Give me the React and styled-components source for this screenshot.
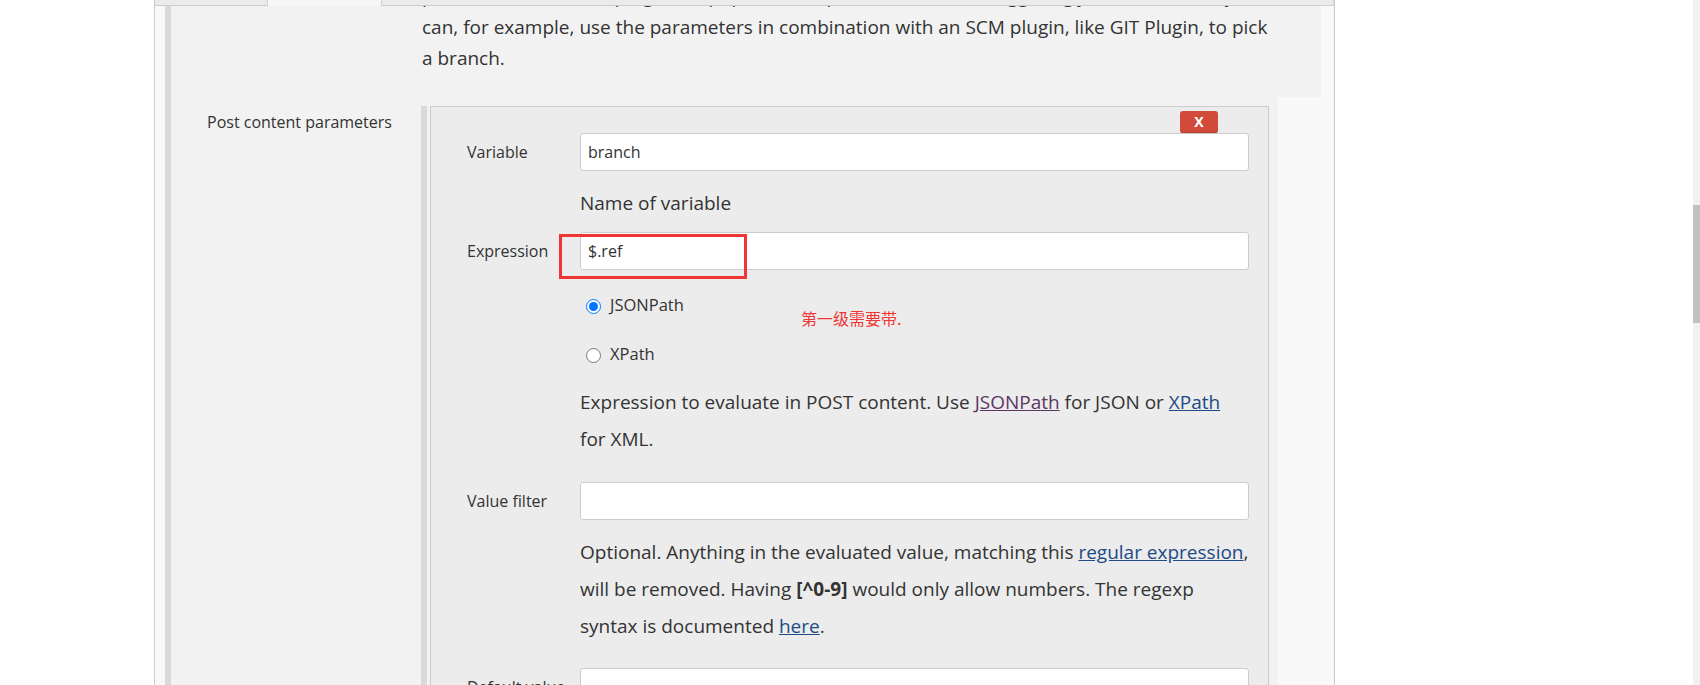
import React from "react";
import styled, { createGlobalStyle } from "styled-components";

const GlobalStyle = createGlobalStyle`
  html, body {
    margin: 0;
    height: 685px;
    overflow: hidden;
    background: #fff;
    font-family: "Open Sans", "Noto Sans CJK SC", sans-serif;
    color: #333;
  }
`;

const Page = styled.div`
  display: flex;
  height: 685px;
`;

const Frame = styled.div`
  position: relative;
  margin-left: 154px;
  width: 1181px;
  box-sizing: border-box;
  height: 685px;
  overflow: hidden;
  background: #f9f9f9;
  border-left: 1px solid #ccc;
  border-right: 1px solid #ccc;
  padding: 0 13px 0 10px;
`;

/* sticky tab strip, scrolled almost out of view */
const TabBar = styled.div`
  position: absolute;
  top: 0;
  left: 0;
  right: 0;
  height: 6px;
  display: flex;
  z-index: 2;
`;

const Tab = styled.div`
  width: ${(p) => p.$w}px;
  flex: ${(p) => (p.$w ? "none" : 1)};
  box-sizing: border-box;
  background: ${(p) => (p.$active ? "#f7f7f7" : "#ebebeb")};
  border-bottom: ${(p) => (p.$active ? "none" : "1px solid #cdcdcd")};
  border-right: 1px solid #d4d4d4;
`;

const Section = styled.div`
  border-left: 6px solid #d9d9d9;
  margin-top: -19px;
`;

const Description = styled.div`
  background: #f2f2f2;
  padding: 0 0 23px 251px;
  font-size: 19px;
  line-height: 31px;
  white-space: nowrap;
`;

const SettingRow = styled.div`
  display: flex;
`;

const SettingLabel = styled.div`
  width: 250px;
  flex: none;
  box-sizing: border-box;
  background: #f2f2f2;
  padding: 13px 0 0 36px;
  font-size: 16px;
  line-height: 24px;
`;

const SettingField = styled.div`
  flex: 1;
  background: #f2f2f2;
  padding: 9px 9px 0 0;
  height: 600px;
`;

const HelpCell = styled.div`
  width: 43px;
  flex: none;
`;

const Repeated = styled.div`
  border-left: 6px solid #d9d9d9;
  padding-left: 3px;
  height: 100%;
`;

const Chunk = styled.div`
  display: grid;
  grid-template-columns: 149px 1fr;
  align-content: start;
  background: #ececec;
  border: 1px solid #ccc;
  border-bottom: none;
  padding: 4px 19px 0 0;
  height: 100%;
  box-sizing: border-box;
`;

const ButtonBar = styled.div`
  grid-column: 1 / -1;
  display: flex;
  justify-content: flex-end;
  padding-right: 31px;
`;

const DeleteButton = styled.button`
  width: 38px;
  height: 22px;
  padding: 0;
  border: none;
  border-radius: 3px;
  background: #d24a39;
  box-shadow: inset 0 -1px 0 #b83c2d;
  color: #fff;
  font-family: "Open Sans", sans-serif;
  font-weight: 700;
  font-size: 14px;
  line-height: 22px;
`;

const Label = styled.div`
  grid-column: 1;
  align-self: center;
  padding-left: 36px;
  margin-top: ${(p) => p.$gap || 0}px;
  font-size: 16px;
  line-height: 24px;
  white-space: nowrap;
`;

const Control = styled.div`
  grid-column: 2;
  position: relative;
  margin-top: ${(p) => p.$gap || 0}px;
`;

const TextBox = styled.input`
  display: block;
  width: 100%;
  height: 38px;
  box-sizing: border-box;
  border: 1px solid #ccc;
  border-radius: 3px;
  background: #fff;
  padding: 0 7px;
  font-family: "Open Sans", sans-serif;
  font-size: 16px;
  color: #333;
  outline: none;
`;

/* red marker drawn over the screenshot */
const Highlight = styled.div`
  position: absolute;
  left: -21px;
  top: 2px;
  width: 188px;
  height: 45px;
  box-sizing: border-box;
  border: 3px solid #f03535;
  pointer-events: none;
`;

const Help = styled.div`
  grid-column: 2;
  margin-top: ${(p) => p.$gap || 0}px;
  font-size: 19px;
  line-height: 37px;
  white-space: nowrap;
  b {
    font-weight: 700;
  }
`;

const HelpLink = styled.a`
  color: ${(p) => (p.$visited ? "#5c3566" : "#204a87")};
  text-decoration: underline;
`;

const RadioGroup = styled.div`
  grid-column: 2;
  position: relative;
  margin-top: 10px;
`;

const RadioRow = styled.label`
  display: flex;
  align-items: center;
  height: 49px;
  font-size: 16.5px;
`;

const Radio = styled.input`
  width: 15px;
  height: 15px;
  margin: 4px 9px 0 6px;
`;

const Note = styled.div`
  position: absolute;
  left: 221px;
  top: 27px;
  font-family: "Noto Sans CJK SC", sans-serif;
  font-size: 16px;
  line-height: 22px;
  color: #f03535;
`;

const Scrollbar = styled.div`
  margin-left: auto;
  width: 7px;
  background: #f1f1f1;
`;

const Thumb = styled.div`
  margin-top: 205px;
  height: 118px;
  background: #c1c1c1;
`;

export default function App() {
  return (
    <>
      <GlobalStyle />
      <Page>
        <Frame>
          <TabBar>
            <Tab $w={113} />
            <Tab $w={114} $active />
            <Tab />
          </TabBar>
          <Section>
            <Description>
              parameters, then the plugin will populate the parameters when triggering job. That means you
              <br />
              can, for example, use the parameters in combination with an SCM plugin, like GIT Plugin, to pick
              <br />
              a branch.
            </Description>
            <SettingRow>
              <SettingLabel>Post content parameters</SettingLabel>
              <SettingField>
                <Repeated>
                  <Chunk>
                    <ButtonBar>
                      <DeleteButton type="button">X</DeleteButton>
                    </ButtonBar>

                    <Label>Variable</Label>
                    <Control>
                      <TextBox defaultValue="branch" />
                    </Control>
                    <Help $gap={14}>Name of variable</Help>

                    <Label $gap={10}>Expression</Label>
                    <Control $gap={10}>
                      <TextBox defaultValue="$.ref" />
                      <Highlight />
                    </Control>
                    <RadioGroup>
                      <RadioRow>
                        <Radio type="radio" name="kind" defaultChecked />
                        JSONPath
                      </RadioRow>
                      <RadioRow>
                        <Radio type="radio" name="kind" />
                        XPath
                      </RadioRow>
                      <Note>第一级需要带.</Note>
                    </RadioGroup>
                    <Help $gap={6}>
                      Expression to evaluate in POST content. Use <HelpLink $visited>JSONPath</HelpLink> for JSON or{" "}
                      <HelpLink>XPath</HelpLink>
                      <br />
                      for XML.
                    </Help>

                    <Label $gap={24}>Value filter</Label>
                    <Control $gap={24}>
                      <TextBox />
                    </Control>
                    <Help $gap={14}>
                      Optional. Anything in the evaluated value, matching this <HelpLink>regular expression</HelpLink>,
                      <br />
                      will be removed. Having <b>[^0-9]</b> would only allow numbers. The regexp
                      <br />
                      syntax is documented <HelpLink>here</HelpLink>.
                    </Help>

                    <Label $gap={23}>Default value</Label>
                    <Control $gap={23}>
                      <TextBox />
                    </Control>
                  </Chunk>
                </Repeated>
              </SettingField>
              <HelpCell />
            </SettingRow>
          </Section>
        </Frame>
        <Scrollbar>
          <Thumb />
        </Scrollbar>
      </Page>
    </>
  );
}
